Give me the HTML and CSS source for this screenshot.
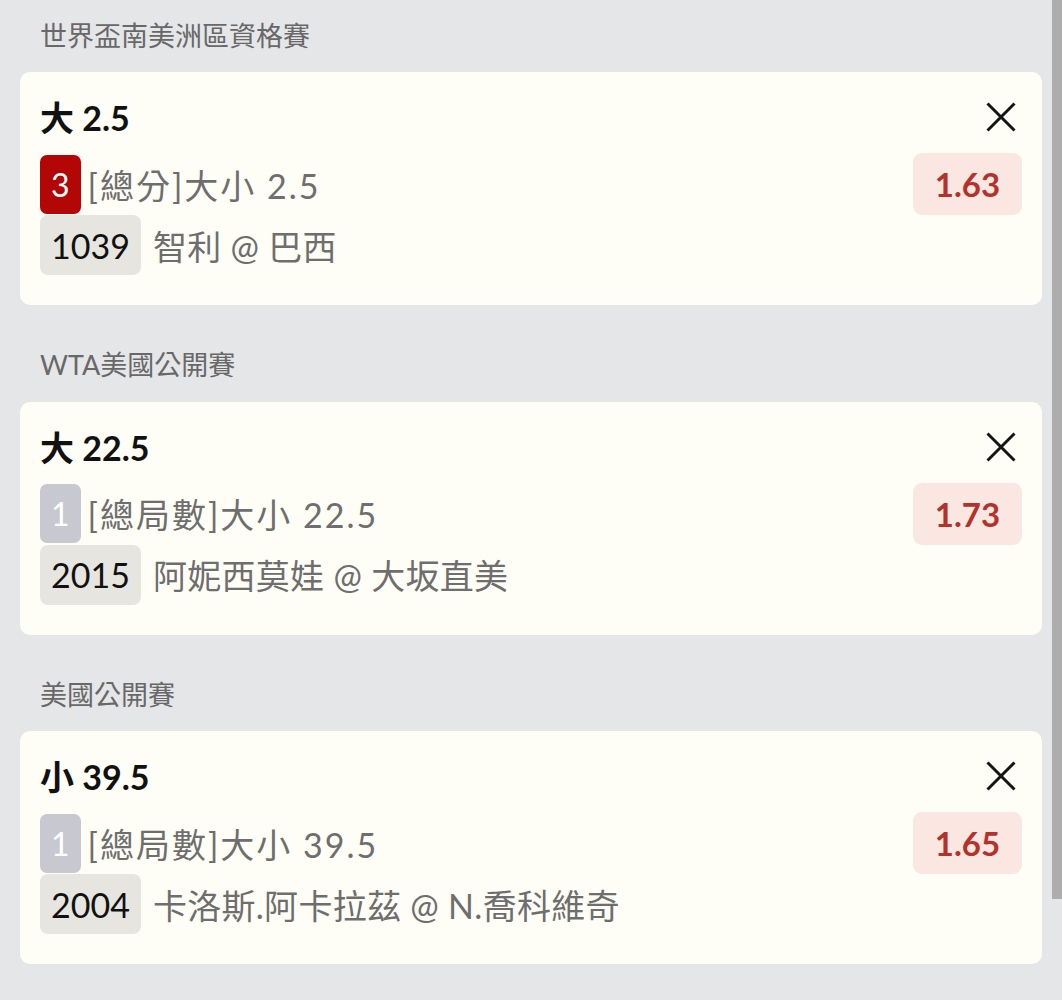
FILE: index.html
```html
<!DOCTYPE html>
<html lang="zh-Hant">
<head>
<meta charset="utf-8">
<title>投注單</title>
<link rel="stylesheet" href="styles.css">
</head>
<body>
<div class="list">
  <section class="group">
    <div class="group-title">世界盃南美洲區資格賽</div>
    <div class="card">
      <div class="info">
        <div class="pick">大 2.5</div>
        <div class="row">
          <span class="seq seq-red">3</span>
          <span class="market">[總分]大小 2.5</span>
        </div>
        <div class="row">
          <span class="code">1039</span>
          <span class="match">智利 @ 巴西</span>
        </div>
      </div>
      <div class="side">
        <svg class="close" viewBox="0 0 30 30" width="30" height="30"><path d="M1.5 1.5 L28.5 28.5 M28.5 1.5 L1.5 28.5" stroke="#151515" stroke-width="3" fill="none"/></svg>
        <div class="odds">1.63</div>
      </div>
    </div>
  </section>

  <section class="group">
    <div class="group-title">WTA美國公開賽</div>
    <div class="card">
      <div class="info">
        <div class="pick">大 22.5</div>
        <div class="row">
          <span class="seq seq-grey">1</span>
          <span class="market">[總局數]大小 22.5</span>
        </div>
        <div class="row">
          <span class="code">2015</span>
          <span class="match">阿妮西莫娃 @ 大坂直美</span>
        </div>
      </div>
      <div class="side">
        <svg class="close" viewBox="0 0 30 30" width="30" height="30"><path d="M1.5 1.5 L28.5 28.5 M28.5 1.5 L1.5 28.5" stroke="#151515" stroke-width="3" fill="none"/></svg>
        <div class="odds">1.73</div>
      </div>
    </div>
  </section>

  <section class="group">
    <div class="group-title">美國公開賽</div>
    <div class="card">
      <div class="info">
        <div class="pick">小 39.5</div>
        <div class="row">
          <span class="seq seq-grey">1</span>
          <span class="market">[總局數]大小 39.5</span>
        </div>
        <div class="row">
          <span class="code">2004</span>
          <span class="match">卡洛斯.阿卡拉茲 @ N.喬科維奇</span>
        </div>
      </div>
      <div class="side">
        <svg class="close" viewBox="0 0 30 30" width="30" height="30"><path d="M1.5 1.5 L28.5 28.5 M28.5 1.5 L1.5 28.5" stroke="#151515" stroke-width="3" fill="none"/></svg>
        <div class="odds">1.65</div>
      </div>
    </div>
  </section>
</div>
<div class="scroll-thumb"></div>
</body>
</html>
```

FILE: styles.css
```css
* { box-sizing: border-box; }

html, body {
  margin: 0;
  padding: 0;
  background: #e5e6e8;
}

body {
  font-family: Lato, "Noto Sans CJK TC", "Noto Sans", sans-serif;
  color: #111;
}

.list {
  padding: 0 20px;
  display: flex;
  flex-direction: column;
  gap: 24.5px;
}

.group-title {
  height: 72px;
  display: flex;
  align-items: center;
  padding-left: 20px;
  padding-bottom: 4px;
  font-size: 27px;
  color: #686868;
}

.card {
  background: #fffef6;
  border-radius: 10px;
  padding: 20px 20px 30px 20px;
  display: flex;
  justify-content: space-between;
}

.info {
  display: flex;
  flex-direction: column;
}

.pick {
  font-size: 34px;
  font-weight: 700;
  line-height: 52px;
  height: 52px;
  margin-bottom: 10px;
  color: #111;
}

.row {
  display: flex;
  align-items: center;
  height: 60px;
  font-size: 34px;
}

.row + .row {
  margin-top: 1px;
}

.seq {
  height: 59px;
  display: inline-flex;
  align-items: center;
  padding: 0 11px;
  border-radius: 7px;
  color: #fff;
  font-size: 32px;
  margin-right: 7px;
}

.seq-red { background: #b30606; }
.seq-grey { background: #c8c8d0; }

.market {
  color: #6e6e6e;
  letter-spacing: 2px;
}

.code {
  height: 60px;
  display: inline-flex;
  align-items: center;
  padding: 0 11px;
  border-radius: 8px;
  background: #e7e5df;
  color: #111;
  margin-right: 12px;
}

.match {
  color: #6e6e6e;
  letter-spacing: 0.3px;
}

.side {
  display: flex;
  flex-direction: column;
  align-items: flex-end;
}

.close {
  display: block;
  margin-top: 10px;
  margin-right: 6px;
}

.odds {
  margin-top: 21px;
  width: 109px;
  height: 62px;
  display: flex;
  align-items: center;
  justify-content: center;
  border-radius: 9px;
  background: #fae7e1;
  color: #b3322b;
  font-size: 33px;
  font-weight: 700;
}

.scroll-thumb {
  position: fixed;
  top: 0;
  right: 0;
  width: 10px;
  height: 899px;
  background: #adadad;
}
```
